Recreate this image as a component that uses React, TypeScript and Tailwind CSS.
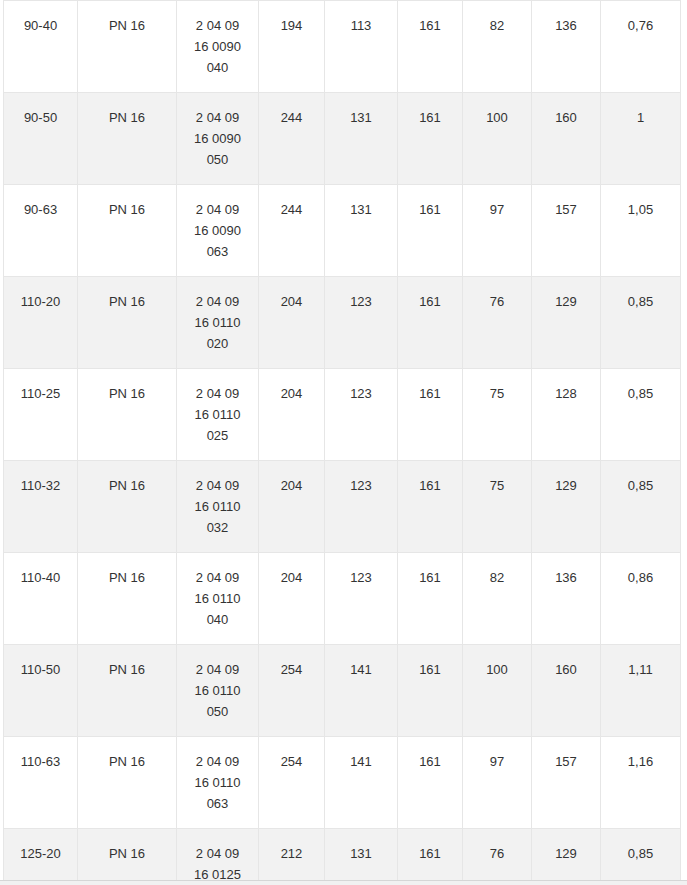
const rows = [
  ['90-40', 'PN 16', ['2 04 09', '16 0090', '040'], '194', '113', '161', '82', '136', '0,76'],
  ['90-50', 'PN 16', ['2 04 09', '16 0090', '050'], '244', '131', '161', '100', '160', '1'],
  ['90-63', 'PN 16', ['2 04 09', '16 0090', '063'], '244', '131', '161', '97', '157', '1,05'],
  ['110-20', 'PN 16', ['2 04 09', '16 0110', '020'], '204', '123', '161', '76', '129', '0,85'],
  ['110-25', 'PN 16', ['2 04 09', '16 0110', '025'], '204', '123', '161', '75', '128', '0,85'],
  ['110-32', 'PN 16', ['2 04 09', '16 0110', '032'], '204', '123', '161', '75', '129', '0,85'],
  ['110-40', 'PN 16', ['2 04 09', '16 0110', '040'], '204', '123', '161', '82', '136', '0,86'],
  ['110-50', 'PN 16', ['2 04 09', '16 0110', '050'], '254', '141', '161', '100', '160', '1,11'],
  ['110-63', 'PN 16', ['2 04 09', '16 0110', '063'], '254', '141', '161', '97', '157', '1,16'],
  ['125-20', 'PN 16', ['2 04 09', '16 0125', '020'], '212', '131', '161', '76', '129', '0,85'],
] as const;

const widths = ['w-[74px]', 'w-[99px]', 'w-[82px]', 'w-[66px]', 'w-[73px]', 'w-[65px]', 'w-[69px]', 'w-[69px]', 'w-[80px]'];

export default function App() {
  return (
    <div className="w-[687px] h-[885px] bg-white overflow-hidden font-['Liberation_Sans',Arial,sans-serif] text-[13px] leading-[21px] text-[#333]">
      <div className="h-[880px] overflow-hidden pl-[3px]">
        <table className="table-fixed border-collapse w-[677px]">
          <colgroup>
            {widths.map((w, i) => (
              <col key={i} className={w} />
            ))}
          </colgroup>
          <tbody>
            {rows.map((r, i) => (
              <tr key={i} className={i % 2 === 1 ? 'bg-[#f2f2f2]' : 'bg-white'}>
                {r.map((cell, j) => (
                  <td key={j} className="border border-[#e6e6e6] h-[92px] px-2 pt-[14px] pb-[14px] align-top text-center">
                    {Array.isArray(cell) ? cell.map((line, k) => <div key={k}>{line}</div>) : cell}
                  </td>
                ))}
              </tr>
            ))}
          </tbody>
        </table>
      </div>
      {/* scrollbar strip */}
      <div className="h-[5px] border-t border-[#d6d6d6] bg-[#f1f1f1]" />
    </div>
  );
}
